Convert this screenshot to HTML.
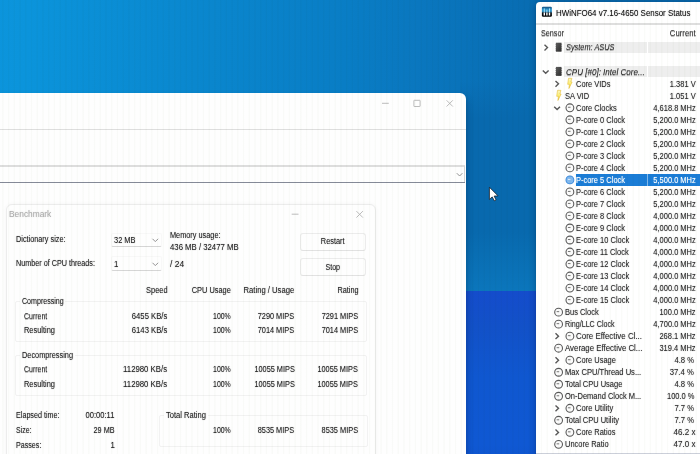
<!DOCTYPE html>
<html><head><meta charset="utf-8"><title>HWiNFO64 Sensor Status / 7-Zip Benchmark</title>
<style>
html,body{margin:0;padding:0;}
body{width:700px;height:454px;overflow:hidden;position:relative;background:#0b74c4;font-family:"Liberation Sans", sans-serif;}
#root{position:absolute;left:0;top:0;width:700px;height:454px;overflow:hidden;}
.abs{position:absolute;}
#bg{left:-20px;top:-20px;width:740px;height:494px;
 background:linear-gradient(93deg,#0c95dd 0px,#0b94db 50px,#0a87ce 220px,#097dc5 370px,#0a77bf 440px,#086db3 545px,#086aae 580px,#0868ac 760px);}
#bg3{left:460px;top:80px;width:80px;height:210.7px;background:linear-gradient(180deg,rgba(8,105,174,0) 0%,#0869ae 18%,#0869ae 72%,#0b76bc 100%);}
#bg2{left:460px;top:290.7px;width:80px;height:180px;background:linear-gradient(180deg,#144ccc 0%,#1251c8 20%,#0f57d0 48%,#0f58d3 85%,#0e54cc 100%);}
#zwin{left:-20px;top:93px;width:486px;height:390px;background:#fefefe;border-radius:6px;box-shadow:1px 4px 7px rgba(0,0,30,0.22);}
.hl{position:absolute;left:0;height:1px;}
#bench{left:5.9px;top:204px;width:370.4px;height:270px;background:#fefefe;border:1px solid #ececec;border-radius:6px;box-sizing:border-box;box-shadow:0 0 4px rgba(0,0,0,0.04);}
.grp{position:absolute;border:1px solid #f2f2f2;box-sizing:border-box;border-radius:2px;}
.lbl{position:absolute;background:#fefefe;height:3px;}
.btn{position:absolute;border:1px solid #ececec;border-bottom-color:#e2e2e2;border-radius:3px;box-sizing:border-box;background:#fefefe;}
.dd{position:absolute;border:1px solid #f8f8f8;border-bottom:1px solid #d6d6d6;border-radius:2px;box-sizing:border-box;background:#fefefe;}
#hw{left:535.7px;top:2.2px;width:185px;height:480px;background:#ffffff;border-radius:4px;box-shadow:0 1px 7px rgba(0,0,30,0.30);}
.t{position:absolute;white-space:pre;line-height:12px;height:12px;-webkit-text-stroke:0.0px currentColor;text-shadow:0 0 1.2px rgba(40,40,40,0.45);}
svg{position:absolute;left:0;top:0;overflow:visible;}
</style></head><body>
<div id="root">
<div id="bg" class="abs"></div>
<div id="bg3" class="abs"></div>
<div id="bg2" class="abs"></div>

<div id="zwin" class="abs"></div>
<div class="hl" style="top:128.5px;width:466px;height:1.5px;background:#dedede;"></div>
<div class="hl" style="top:165.1px;width:465px;height:1.5px;background:#dddddd;"></div>
<div class="hl" style="top:181.5px;width:465px;height:1.4px;background:#858a98;"></div>
<div class="abs" style="left:464.3px;top:166px;width:1px;height:16px;background:#d4d4d4;"></div>

<div id="bench" class="abs"></div>
<div class="dd" style="left:111px;top:232.8px;width:50.5px;height:14.2px;"></div>
<div class="dd" style="left:111px;top:256px;width:50.5px;height:14.5px;"></div>
<div class="btn" style="left:300px;top:233px;width:66px;height:17.5px;"></div>
<div class="btn" style="left:300px;top:258px;width:66px;height:17.5px;"></div>
<div class="grp" style="left:14.8px;top:301px;width:352.7px;height:40.5px;"></div>
<div class="lbl" style="left:20px;top:300px;width:45px;"></div>
<div class="grp" style="left:14.8px;top:355px;width:352.7px;height:40.5px;"></div>
<div class="lbl" style="left:20px;top:354px;width:55px;"></div>
<div class="grp" style="left:159px;top:415px;width:208.5px;height:32px;"></div>
<div class="lbl" style="left:164px;top:414px;width:44px;"></div>

<div id="hw" class="abs"></div>
<div class="hl" style="left:536px;top:23.4px;width:180px;height:1.4px;background:#dedede;"></div>
<div class="abs" style="left:564.3px;top:42px;width:82.8px;height:11px;background:#eeeeee;"></div>
<div class="abs" style="left:648px;top:42px;width:62px;height:11px;background:#eeeeee;"></div>
<div class="abs" style="left:564.3px;top:66.2px;width:82.8px;height:11px;background:#eeeeee;"></div>
<div class="abs" style="left:648px;top:66.2px;width:62px;height:11px;background:#eeeeee;"></div>
<div class="abs" style="left:576px;top:174px;width:134px;height:11.5px;background:#1a7cd6;"></div>
<div class="abs" style="left:647px;top:174px;width:0.8px;height:11.5px;background:rgba(255,255,255,0.45);"></div>
<div class="hl" style="left:536px;top:452.7px;width:174px;height:3px;background:#ccd0da;"></div>

<svg width="700" height="454" viewBox="0 0 700 454">
<!-- 7-zip main window caption buttons -->
<path d="M382 103.3h6.8" stroke="#b4b4b4" stroke-width="0.9" fill="none"/>
<rect x="413.9" y="100.3" width="6.2" height="6.2" rx="0.3" fill="none" stroke="#b4b4b4" stroke-width="0.9"/>
<path d="M446.6 100.3l6.2 6.2M452.8 100.3l-6.2 6.2" stroke="#b4b4b4" stroke-width="0.9" fill="none"/>
<path d="M456.8 173.2 L459.6 176.0 L462.40000000000003 173.2" stroke="#888" stroke-width="0.9" fill="none"/>
<!-- benchmark caption buttons -->
<path d="M291.7 214.2h6.8" stroke="#b4b4b4" stroke-width="0.9" fill="none"/>
<path d="M356.4 211.1l6.5 6.5M362.9 211.1l-6.5 6.5" stroke="#b4b4b4" stroke-width="0.9" fill="none"/>
<path d="M152.5 238.79999999999998 L155.3 241.6 L158.10000000000002 238.79999999999998" stroke="#888" stroke-width="0.9" fill="none"/>
<path d="M152.5 262.8 L155.3 265.59999999999997 L158.10000000000002 262.8" stroke="#888" stroke-width="0.9" fill="none"/>
<!-- HWiNFO app icon -->
<defs>
<linearGradient id="ig" x1="0" y1="0" x2="0" y2="1"><stop offset="0" stop-color="#15507f"/><stop offset="0.32" stop-color="#2f9fd8"/><stop offset="0.5" stop-color="#2a80b0"/><stop offset="0.62" stop-color="#0c1218"/><stop offset="1" stop-color="#000"/></linearGradient>
<linearGradient id="bg_bolt" x1="0" y1="0" x2="0" y2="1"><stop offset="0" stop-color="#fffbc4"/><stop offset="0.5" stop-color="#fff27a"/><stop offset="1" stop-color="#ffe21a"/></linearGradient>
<linearGradient id="bg_chip" x1="0" y1="0" x2="1" y2="1"><stop offset="0" stop-color="#5e5e5e"/><stop offset="1" stop-color="#2c2c2c"/></linearGradient>
</defs>
<rect x="541.9" y="6.8" width="10" height="10" rx="1.2" fill="url(#ig)"/>
<path d="M544.3 8.4v3.8M549.5 8.4v3.8M546.9 9.6v2.6" stroke="#b8ecff" stroke-width="0.9"/>
<path d="M544.3 12.5v3.1M546.9 12.5v3.1M549.5 12.5v3.1" stroke="#ffffff" stroke-width="1.4"/>
<path d="M568.50 78.30 L571.90 78.30 L570.90 82.00 L572.10 82.00 L568.90 88.50 L569.40 84.30 L567.70 84.30 Z" fill="url(#bg_bolt)" stroke="#e2bc3c" stroke-width="0.6" stroke-linejoin="round"/><path d="M555.5 80.89999999999999 L558.5 83.8 L555.5 86.7" stroke="#585858" stroke-width="1.4" fill="none"/><path d="M557.50 90.32 L560.90 90.32 L559.90 94.02 L561.10 94.02 L557.90 100.52 L558.40 96.32 L556.70 96.32 Z" fill="url(#bg_bolt)" stroke="#e2bc3c" stroke-width="0.6" stroke-linejoin="round"/><circle cx="569.9" cy="107.78999999999999" r="3.9" fill="#fbfbfb" stroke="#5a5a5a" stroke-width="1.1"/><path d="M567.9 107.28999999999999H570.5" stroke="#6a6a6a" stroke-width="0.9" fill="none"/><path d="M554.2 106.68999999999998 L557.1 109.58999999999999 L560.0 106.68999999999998" stroke="#585858" stroke-width="1.4" fill="none"/><circle cx="569.9" cy="119.81" r="3.9" fill="#fbfbfb" stroke="#5a5a5a" stroke-width="1.1"/><path d="M567.9 119.31H570.5" stroke="#6a6a6a" stroke-width="0.9" fill="none"/><circle cx="569.9" cy="131.83" r="3.9" fill="#fbfbfb" stroke="#5a5a5a" stroke-width="1.1"/><path d="M567.9 131.33H570.5" stroke="#6a6a6a" stroke-width="0.9" fill="none"/><circle cx="569.9" cy="143.85" r="3.9" fill="#fbfbfb" stroke="#5a5a5a" stroke-width="1.1"/><path d="M567.9 143.35H570.5" stroke="#6a6a6a" stroke-width="0.9" fill="none"/><circle cx="569.9" cy="155.87" r="3.9" fill="#fbfbfb" stroke="#5a5a5a" stroke-width="1.1"/><path d="M567.9 155.37H570.5" stroke="#6a6a6a" stroke-width="0.9" fill="none"/><circle cx="569.9" cy="167.89000000000001" r="3.9" fill="#fbfbfb" stroke="#5a5a5a" stroke-width="1.1"/><path d="M567.9 167.39000000000001H570.5" stroke="#6a6a6a" stroke-width="0.9" fill="none"/><circle cx="569.9" cy="179.91" r="3.9" fill="#80b8ee" stroke="#3f8cdc" stroke-width="1.05"/><path d="M567.9 179.41H570.5" stroke="#e8f2fc" stroke-width="0.9" fill="none"/><circle cx="569.9" cy="191.92999999999998" r="3.9" fill="#fbfbfb" stroke="#5a5a5a" stroke-width="1.1"/><path d="M567.9 191.42999999999998H570.5" stroke="#6a6a6a" stroke-width="0.9" fill="none"/><circle cx="569.9" cy="203.95" r="3.9" fill="#fbfbfb" stroke="#5a5a5a" stroke-width="1.1"/><path d="M567.9 203.45H570.5" stroke="#6a6a6a" stroke-width="0.9" fill="none"/><circle cx="569.9" cy="215.97" r="3.9" fill="#fbfbfb" stroke="#5a5a5a" stroke-width="1.1"/><path d="M567.9 215.47H570.5" stroke="#6a6a6a" stroke-width="0.9" fill="none"/><circle cx="569.9" cy="227.99" r="3.9" fill="#fbfbfb" stroke="#5a5a5a" stroke-width="1.1"/><path d="M567.9 227.49H570.5" stroke="#6a6a6a" stroke-width="0.9" fill="none"/><circle cx="569.9" cy="240.01" r="3.9" fill="#fbfbfb" stroke="#5a5a5a" stroke-width="1.1"/><path d="M567.9 239.51H570.5" stroke="#6a6a6a" stroke-width="0.9" fill="none"/><circle cx="569.9" cy="252.03" r="3.9" fill="#fbfbfb" stroke="#5a5a5a" stroke-width="1.1"/><path d="M567.9 251.53H570.5" stroke="#6a6a6a" stroke-width="0.9" fill="none"/><circle cx="569.9" cy="264.04999999999995" r="3.9" fill="#fbfbfb" stroke="#5a5a5a" stroke-width="1.1"/><path d="M567.9 263.54999999999995H570.5" stroke="#6a6a6a" stroke-width="0.9" fill="none"/><circle cx="569.9" cy="276.06999999999994" r="3.9" fill="#fbfbfb" stroke="#5a5a5a" stroke-width="1.1"/><path d="M567.9 275.56999999999994H570.5" stroke="#6a6a6a" stroke-width="0.9" fill="none"/><circle cx="569.9" cy="288.09" r="3.9" fill="#fbfbfb" stroke="#5a5a5a" stroke-width="1.1"/><path d="M567.9 287.59H570.5" stroke="#6a6a6a" stroke-width="0.9" fill="none"/><circle cx="569.9" cy="300.10999999999996" r="3.9" fill="#fbfbfb" stroke="#5a5a5a" stroke-width="1.1"/><path d="M567.9 299.60999999999996H570.5" stroke="#6a6a6a" stroke-width="0.9" fill="none"/><circle cx="558.6" cy="312.13" r="3.9" fill="#fbfbfb" stroke="#5a5a5a" stroke-width="1.1"/><path d="M556.6 311.63H559.2" stroke="#6a6a6a" stroke-width="0.9" fill="none"/><circle cx="558.6" cy="324.15" r="3.9" fill="#fbfbfb" stroke="#5a5a5a" stroke-width="1.1"/><path d="M556.6 323.65H559.2" stroke="#6a6a6a" stroke-width="0.9" fill="none"/><circle cx="569.9" cy="336.16999999999996" r="3.9" fill="#fbfbfb" stroke="#5a5a5a" stroke-width="1.1"/><path d="M567.9 335.66999999999996H570.5" stroke="#6a6a6a" stroke-width="0.9" fill="none"/><path d="M555.5 333.32 L558.5 336.21999999999997 L555.5 339.11999999999995" stroke="#585858" stroke-width="1.4" fill="none"/><circle cx="558.6" cy="348.18999999999994" r="3.9" fill="#fbfbfb" stroke="#5a5a5a" stroke-width="1.1"/><path d="M556.6 347.68999999999994H559.2" stroke="#6a6a6a" stroke-width="0.9" fill="none"/><circle cx="569.9" cy="360.2099999999999" r="3.9" fill="#fbfbfb" stroke="#5a5a5a" stroke-width="1.1"/><path d="M567.9 359.7099999999999H570.5" stroke="#6a6a6a" stroke-width="0.9" fill="none"/><path d="M555.5 357.35999999999996 L558.5 360.25999999999993 L555.5 363.1599999999999" stroke="#585858" stroke-width="1.4" fill="none"/><circle cx="558.6" cy="372.23" r="3.9" fill="#fbfbfb" stroke="#5a5a5a" stroke-width="1.1"/><path d="M556.6 371.73H559.2" stroke="#6a6a6a" stroke-width="0.9" fill="none"/><circle cx="558.6" cy="384.25" r="3.9" fill="#fbfbfb" stroke="#5a5a5a" stroke-width="1.1"/><path d="M556.6 383.75H559.2" stroke="#6a6a6a" stroke-width="0.9" fill="none"/><circle cx="558.6" cy="396.27" r="3.9" fill="#fbfbfb" stroke="#5a5a5a" stroke-width="1.1"/><path d="M556.6 395.77H559.2" stroke="#6a6a6a" stroke-width="0.9" fill="none"/><circle cx="569.9" cy="408.28999999999996" r="3.9" fill="#fbfbfb" stroke="#5a5a5a" stroke-width="1.1"/><path d="M567.9 407.78999999999996H570.5" stroke="#6a6a6a" stroke-width="0.9" fill="none"/><path d="M555.5 405.44 L558.5 408.34 L555.5 411.23999999999995" stroke="#585858" stroke-width="1.4" fill="none"/><circle cx="558.6" cy="420.30999999999995" r="3.9" fill="#fbfbfb" stroke="#5a5a5a" stroke-width="1.1"/><path d="M556.6 419.80999999999995H559.2" stroke="#6a6a6a" stroke-width="0.9" fill="none"/><circle cx="569.9" cy="432.3299999999999" r="3.9" fill="#fbfbfb" stroke="#5a5a5a" stroke-width="1.1"/><path d="M567.9 431.8299999999999H570.5" stroke="#6a6a6a" stroke-width="0.9" fill="none"/><path d="M555.5 429.47999999999996 L558.5 432.37999999999994 L555.5 435.2799999999999" stroke="#585858" stroke-width="1.4" fill="none"/><circle cx="558.6" cy="444.3499999999999" r="3.9" fill="#fbfbfb" stroke="#5a5a5a" stroke-width="1.1"/><path d="M556.6 443.8499999999999H559.2" stroke="#6a6a6a" stroke-width="0.9" fill="none"/><path d="M544.5 44.7 L547.5 47.6 L544.5 50.5" stroke="#585858" stroke-width="1.4" fill="none"/><path d="M542.8000000000001 70.45 L545.7 73.35000000000001 L548.6 70.45" stroke="#585858" stroke-width="1.4" fill="none"/><path d="M555.3 44.300000000000004h6.8M555.3 46.300000000000004h6.8M555.3 48.300000000000004h6.8M555.3 50.1h6.8" stroke="#777" stroke-width="0.6"/><rect x="555.9" y="42.7" width="5.6" height="9" fill="url(#bg_chip)"/><path d="M555.3 68.5h6.8M555.3 70.5h6.8M555.3 72.5h6.8M555.3 74.30000000000001h6.8" stroke="#777" stroke-width="0.6"/><rect x="555.9" y="66.9" width="5.6" height="9" fill="url(#bg_chip)"/>
<!-- mouse cursor -->
<path d="M489.4 187.2 L489.4 199.4 L492.2 196.9 L494.3 200.8 L496.1 199.9 L494.1 196.1 L498.1 195.9 Z" fill="#ffffff" stroke="#16202c" stroke-width="0.8" stroke-linejoin="round"/>
</svg>
<span class="t" style="top:208.00px;font-size:9px;color:#adadad;text-shadow:0 0 1.2px rgba(170,170,170,0.5);left:9.20px;transform-origin:0 50%;transform:scaleX(0.9290);">Benchmark</span><span class="t" style="top:233.00px;font-size:8.5px;color:#242424;left:15.80px;transform-origin:0 50%;transform:scaleX(0.8588);">Dictionary size:</span><span class="t" style="top:257.00px;font-size:8.5px;color:#242424;left:15.80px;transform-origin:0 50%;transform:scaleX(0.8487);">Number of CPU threads:</span><span class="t" style="top:234.00px;font-size:8.5px;color:#242424;left:113.70px;transform-origin:0 50%;transform:scaleX(0.8748);">32 MB</span><span class="t" style="top:258.00px;font-size:8.5px;color:#242424;left:113.90px;transform-origin:0 50%;transform:scaleX(0.9200);">1</span><span class="t" style="top:229.00px;font-size:8.5px;color:#242424;left:170.10px;transform-origin:0 50%;transform:scaleX(0.8619);">Memory usage:</span><span class="t" style="top:241.00px;font-size:8.5px;color:#242424;left:170.10px;transform-origin:0 50%;transform:scaleX(0.9130);">436 MB / 32477 MB</span><span class="t" style="top:258.00px;font-size:8.5px;color:#242424;left:170.10px;transform-origin:0 50%;transform:scaleX(0.9938);">/ 24</span><span class="t" style="top:235.00px;font-size:8.5px;color:#242424;left:319.40px;transform-origin:50% 50%;transform:scaleX(0.8684);">Restart</span><span class="t" style="top:261.00px;font-size:8.5px;color:#242424;left:324.05px;transform-origin:50% 50%;transform:scaleX(0.8343);">Stop</span><span class="t" style="top:284.00px;font-size:8.5px;color:#242424;right:532.10px;transform-origin:100% 50%;transform:scaleX(0.8742);">Speed</span><span class="t" style="top:284.00px;font-size:8.5px;color:#242424;right:469.10px;transform-origin:100% 50%;transform:scaleX(0.8732);">CPU Usage</span><span class="t" style="top:284.00px;font-size:8.5px;color:#242424;right:405.50px;transform-origin:100% 50%;transform:scaleX(0.9016);">Rating / Usage</span><span class="t" style="top:284.00px;font-size:8.5px;color:#242424;right:341.80px;transform-origin:100% 50%;transform:scaleX(0.8626);">Rating</span><span class="t" style="top:295.00px;font-size:8.5px;color:#242424;left:21.50px;transform-origin:0 50%;transform:scaleX(0.8327);">Compressing</span><span class="t" style="top:349.00px;font-size:8.5px;color:#242424;left:22.00px;transform-origin:0 50%;transform:scaleX(0.8635);">Decompressing</span><span class="t" style="top:310.00px;font-size:8.5px;color:#242424;text-shadow:0 1px 0.6px rgba(40,40,40,0.4);left:23.50px;transform-origin:0 50%;transform:scaleX(0.8221);">Current</span><span class="t" style="top:310.00px;font-size:8.5px;color:#242424;right:532.50px;transform-origin:100% 50%;transform:scaleX(0.9023);">6455 KB/s</span><span class="t" style="top:310.00px;font-size:8.5px;color:#242424;right:468.80px;transform-origin:100% 50%;transform:scaleX(0.8138);">100%</span><span class="t" style="top:310.00px;font-size:8.5px;color:#242424;right:405.50px;transform-origin:100% 50%;transform:scaleX(0.8630);">7290 MIPS</span><span class="t" style="top:310.00px;font-size:8.5px;color:#242424;right:341.80px;transform-origin:100% 50%;transform:scaleX(0.8654);">7291 MIPS</span><span class="t" style="top:324.00px;font-size:8.5px;color:#242424;left:23.90px;transform-origin:0 50%;transform:scaleX(0.8748);">Resulting</span><span class="t" style="top:324.00px;font-size:8.5px;color:#242424;right:532.50px;transform-origin:100% 50%;transform:scaleX(0.9023);">6143 KB/s</span><span class="t" style="top:324.00px;font-size:8.5px;color:#242424;right:468.80px;transform-origin:100% 50%;transform:scaleX(0.8138);">100%</span><span class="t" style="top:324.00px;font-size:8.5px;color:#242424;right:405.50px;transform-origin:100% 50%;transform:scaleX(0.8630);">7014 MIPS</span><span class="t" style="top:324.00px;font-size:8.5px;color:#242424;right:341.80px;transform-origin:100% 50%;transform:scaleX(0.8654);">7014 MIPS</span><span class="t" style="top:363.00px;font-size:8.5px;color:#242424;text-shadow:0 1px 0.6px rgba(40,40,40,0.4);left:23.50px;transform-origin:0 50%;transform:scaleX(0.8221);">Current</span><span class="t" style="top:363.00px;font-size:8.5px;color:#242424;right:532.50px;transform-origin:100% 50%;transform:scaleX(0.9158);">112980 KB/s</span><span class="t" style="top:363.00px;font-size:8.5px;color:#242424;right:468.80px;transform-origin:100% 50%;transform:scaleX(0.8138);">100%</span><span class="t" style="top:363.00px;font-size:8.5px;color:#242424;right:405.50px;transform-origin:100% 50%;transform:scaleX(0.8636);">10055 MIPS</span><span class="t" style="top:363.00px;font-size:8.5px;color:#242424;right:341.80px;transform-origin:100% 50%;transform:scaleX(0.8636);">10055 MIPS</span><span class="t" style="top:378.00px;font-size:8.5px;color:#242424;left:23.90px;transform-origin:0 50%;transform:scaleX(0.8748);">Resulting</span><span class="t" style="top:378.00px;font-size:8.5px;color:#242424;right:532.50px;transform-origin:100% 50%;transform:scaleX(0.9158);">112980 KB/s</span><span class="t" style="top:378.00px;font-size:8.5px;color:#242424;right:468.80px;transform-origin:100% 50%;transform:scaleX(0.8138);">100%</span><span class="t" style="top:378.00px;font-size:8.5px;color:#242424;right:405.50px;transform-origin:100% 50%;transform:scaleX(0.8636);">10055 MIPS</span><span class="t" style="top:378.00px;font-size:8.5px;color:#242424;right:341.80px;transform-origin:100% 50%;transform:scaleX(0.8636);">10055 MIPS</span><span class="t" style="top:409.00px;font-size:8.5px;color:#242424;left:15.80px;transform-origin:0 50%;transform:scaleX(0.8447);">Elapsed time:</span><span class="t" style="top:409.00px;font-size:8.5px;color:#242424;right:585.70px;transform-origin:100% 50%;transform:scaleX(0.8901);">00:00:11</span><span class="t" style="top:424.00px;font-size:8.5px;color:#242424;left:15.80px;transform-origin:0 50%;transform:scaleX(0.8198);">Size:</span><span class="t" style="top:424.00px;font-size:8.5px;color:#242424;right:585.70px;transform-origin:100% 50%;transform:scaleX(0.8544);">29 MB</span><span class="t" style="top:439.00px;font-size:8.5px;color:#242424;left:15.80px;transform-origin:0 50%;transform:scaleX(0.8397);">Passes:</span><span class="t" style="top:439.00px;font-size:8.5px;color:#242424;right:585.70px;transform-origin:100% 50%;transform:scaleX(0.9200);">1</span><span class="t" style="top:409.00px;font-size:8.5px;color:#242424;left:166.30px;transform-origin:0 50%;transform:scaleX(0.8888);">Total Rating</span><span class="t" style="top:424.00px;font-size:8.5px;color:#242424;right:468.80px;transform-origin:100% 50%;transform:scaleX(0.8138);">100%</span><span class="t" style="top:424.00px;font-size:8.5px;color:#242424;right:405.50px;transform-origin:100% 50%;transform:scaleX(0.8630);">8535 MIPS</span><span class="t" style="top:424.00px;font-size:8.5px;color:#242424;right:341.80px;transform-origin:100% 50%;transform:scaleX(0.8678);">8535 MIPS</span><span class="t" style="top:7.00px;font-size:9.4px;color:#111;left:556.30px;transform-origin:0 50%;transform:scaleX(0.8456);">HWiNFO64 v7.16-4650 Sensor Status</span><span class="t" style="top:27.00px;font-size:8.6px;color:#2c2c2c;text-shadow:0 1px 0.6px rgba(40,40,40,0.4);left:540.50px;transform-origin:0 50%;transform:scaleX(0.8408);">Sensor</span><span class="t" style="top:27.00px;font-size:8.6px;color:#2c2c2c;text-shadow:0 1px 0.6px rgba(40,40,40,0.4);right:4.80px;transform-origin:100% 50%;transform:scaleX(0.9003);">Current</span><span class="t" style="top:41.00px;font-size:8.6px;color:#2c2c2c;text-shadow:0 1px 0.6px rgba(40,40,40,0.4);font-style:italic;left:565.70px;transform-origin:0 50%;transform:scaleX(0.8582);">System: ASUS</span><span class="t" style="top:66.00px;font-size:8.6px;color:#2c2c2c;text-shadow:0 1px 0.6px rgba(40,40,40,0.4);font-style:italic;left:566.00px;transform-origin:0 50%;transform:scaleX(0.9362);">CPU [#0]: Intel Core...</span><span class="t" style="top:78.00px;font-size:8.6px;color:#2c2c2c;left:576.40px;transform-origin:0 50%;transform:scaleX(0.8698);">Core VIDs</span><span class="t" style="top:78.00px;font-size:8.6px;color:#2c2c2c;right:4.60px;transform-origin:100% 50%;transform:scaleX(0.8698);">1.381 V</span><span class="t" style="top:90.00px;font-size:8.6px;color:#2c2c2c;left:565.10px;transform-origin:0 50%;transform:scaleX(0.8698);">SA VID</span><span class="t" style="top:90.00px;font-size:8.6px;color:#2c2c2c;right:4.60px;transform-origin:100% 50%;transform:scaleX(0.8698);">1.051 V</span><span class="t" style="top:102.00px;font-size:8.6px;color:#2c2c2c;left:576.40px;transform-origin:0 50%;transform:scaleX(0.8698);">Core Clocks</span><span class="t" style="top:102.00px;font-size:8.6px;color:#2c2c2c;right:4.60px;transform-origin:100% 50%;transform:scaleX(0.8698);">4,618.8 MHz</span><span class="t" style="top:114.00px;font-size:8.6px;color:#2c2c2c;left:576.40px;transform-origin:0 50%;transform:scaleX(0.8698);">P-core 0 Clock</span><span class="t" style="top:114.00px;font-size:8.6px;color:#2c2c2c;right:4.60px;transform-origin:100% 50%;transform:scaleX(0.8698);">5,200.0 MHz</span><span class="t" style="top:126.00px;font-size:8.6px;color:#2c2c2c;left:576.40px;transform-origin:0 50%;transform:scaleX(0.8698);">P-core 1 Clock</span><span class="t" style="top:126.00px;font-size:8.6px;color:#2c2c2c;right:4.60px;transform-origin:100% 50%;transform:scaleX(0.8698);">5,200.0 MHz</span><span class="t" style="top:138.00px;font-size:8.6px;color:#2c2c2c;left:576.40px;transform-origin:0 50%;transform:scaleX(0.8698);">P-core 2 Clock</span><span class="t" style="top:138.00px;font-size:8.6px;color:#2c2c2c;right:4.60px;transform-origin:100% 50%;transform:scaleX(0.8698);">5,200.0 MHz</span><span class="t" style="top:150.00px;font-size:8.6px;color:#2c2c2c;left:576.40px;transform-origin:0 50%;transform:scaleX(0.8698);">P-core 3 Clock</span><span class="t" style="top:150.00px;font-size:8.6px;color:#2c2c2c;right:4.60px;transform-origin:100% 50%;transform:scaleX(0.8698);">5,200.0 MHz</span><span class="t" style="top:162.00px;font-size:8.6px;color:#2c2c2c;left:576.40px;transform-origin:0 50%;transform:scaleX(0.8698);">P-core 4 Clock</span><span class="t" style="top:162.00px;font-size:8.6px;color:#2c2c2c;right:4.60px;transform-origin:100% 50%;transform:scaleX(0.8698);">5,200.0 MHz</span><span class="t" style="top:174.00px;font-size:8.6px;color:#ffffff;text-shadow:0 0 1.2px rgba(255,255,255,0.55);left:576.40px;transform-origin:0 50%;transform:scaleX(0.8698);">P-core 5 Clock</span><span class="t" style="top:174.00px;font-size:8.6px;color:#ffffff;text-shadow:0 0 1.2px rgba(255,255,255,0.55);right:4.60px;transform-origin:100% 50%;transform:scaleX(0.8698);">5,500.0 MHz</span><span class="t" style="top:186.00px;font-size:8.6px;color:#2c2c2c;left:576.40px;transform-origin:0 50%;transform:scaleX(0.8698);">P-core 6 Clock</span><span class="t" style="top:186.00px;font-size:8.6px;color:#2c2c2c;right:4.60px;transform-origin:100% 50%;transform:scaleX(0.8698);">5,200.0 MHz</span><span class="t" style="top:198.00px;font-size:8.6px;color:#2c2c2c;left:576.40px;transform-origin:0 50%;transform:scaleX(0.8698);">P-core 7 Clock</span><span class="t" style="top:198.00px;font-size:8.6px;color:#2c2c2c;right:4.60px;transform-origin:100% 50%;transform:scaleX(0.8698);">5,200.0 MHz</span><span class="t" style="top:210.00px;font-size:8.6px;color:#2c2c2c;left:576.40px;transform-origin:0 50%;transform:scaleX(0.8698);">E-core 8 Clock</span><span class="t" style="top:210.00px;font-size:8.6px;color:#2c2c2c;right:4.60px;transform-origin:100% 50%;transform:scaleX(0.8698);">4,000.0 MHz</span><span class="t" style="top:222.00px;font-size:8.6px;color:#2c2c2c;left:576.40px;transform-origin:0 50%;transform:scaleX(0.8698);">E-core 9 Clock</span><span class="t" style="top:222.00px;font-size:8.6px;color:#2c2c2c;right:4.60px;transform-origin:100% 50%;transform:scaleX(0.8698);">4,000.0 MHz</span><span class="t" style="top:234.00px;font-size:8.6px;color:#2c2c2c;left:576.40px;transform-origin:0 50%;transform:scaleX(0.8698);">E-core 10 Clock</span><span class="t" style="top:234.00px;font-size:8.6px;color:#2c2c2c;right:4.60px;transform-origin:100% 50%;transform:scaleX(0.8698);">4,000.0 MHz</span><span class="t" style="top:246.00px;font-size:8.6px;color:#2c2c2c;left:576.40px;transform-origin:0 50%;transform:scaleX(0.8698);">E-core 11 Clock</span><span class="t" style="top:246.00px;font-size:8.6px;color:#2c2c2c;right:4.60px;transform-origin:100% 50%;transform:scaleX(0.8698);">4,000.0 MHz</span><span class="t" style="top:258.00px;font-size:8.6px;color:#2c2c2c;left:576.40px;transform-origin:0 50%;transform:scaleX(0.8698);">E-core 12 Clock</span><span class="t" style="top:258.00px;font-size:8.6px;color:#2c2c2c;right:4.60px;transform-origin:100% 50%;transform:scaleX(0.8698);">4,000.0 MHz</span><span class="t" style="top:270.00px;font-size:8.6px;color:#2c2c2c;left:576.40px;transform-origin:0 50%;transform:scaleX(0.8698);">E-core 13 Clock</span><span class="t" style="top:270.00px;font-size:8.6px;color:#2c2c2c;right:4.60px;transform-origin:100% 50%;transform:scaleX(0.8698);">4,000.0 MHz</span><span class="t" style="top:282.00px;font-size:8.6px;color:#2c2c2c;left:576.40px;transform-origin:0 50%;transform:scaleX(0.8698);">E-core 14 Clock</span><span class="t" style="top:282.00px;font-size:8.6px;color:#2c2c2c;right:4.60px;transform-origin:100% 50%;transform:scaleX(0.8698);">4,000.0 MHz</span><span class="t" style="top:294.00px;font-size:8.6px;color:#2c2c2c;left:576.40px;transform-origin:0 50%;transform:scaleX(0.8698);">E-core 15 Clock</span><span class="t" style="top:294.00px;font-size:8.6px;color:#2c2c2c;right:4.60px;transform-origin:100% 50%;transform:scaleX(0.8698);">4,000.0 MHz</span><span class="t" style="top:306.00px;font-size:8.6px;color:#2c2c2c;left:565.10px;transform-origin:0 50%;transform:scaleX(0.8698);">Bus Clock</span><span class="t" style="top:306.00px;font-size:8.6px;color:#2c2c2c;right:4.60px;transform-origin:100% 50%;transform:scaleX(0.8698);">100.0 MHz</span><span class="t" style="top:318.00px;font-size:8.6px;color:#2c2c2c;left:565.10px;transform-origin:0 50%;transform:scaleX(0.8308);">Ring/LLC Clock</span><span class="t" style="top:318.00px;font-size:8.6px;color:#2c2c2c;right:4.60px;transform-origin:100% 50%;transform:scaleX(0.8698);">4,700.0 MHz</span><span class="t" style="top:330.00px;font-size:8.6px;color:#2c2c2c;left:576.40px;transform-origin:0 50%;transform:scaleX(0.9233);">Core Effective Cl...</span><span class="t" style="top:330.00px;font-size:8.6px;color:#2c2c2c;right:4.60px;transform-origin:100% 50%;transform:scaleX(0.8698);">268.1 MHz</span><span class="t" style="top:342.00px;font-size:8.6px;color:#2c2c2c;left:565.10px;transform-origin:0 50%;transform:scaleX(0.9136);">Average Effective Cl...</span><span class="t" style="top:342.00px;font-size:8.6px;color:#2c2c2c;right:4.60px;transform-origin:100% 50%;transform:scaleX(0.8698);">319.4 MHz</span><span class="t" style="top:354.00px;font-size:8.6px;color:#2c2c2c;left:576.40px;transform-origin:0 50%;transform:scaleX(0.8698);">Core Usage</span><span class="t" style="top:354.00px;font-size:8.6px;color:#2c2c2c;right:5.80px;transform-origin:100% 50%;transform:scaleX(0.8915);">4.8 %</span><span class="t" style="top:366.00px;font-size:8.6px;color:#2c2c2c;left:565.10px;transform-origin:0 50%;transform:scaleX(0.8816);">Max CPU/Thread Us...</span><span class="t" style="top:366.00px;font-size:8.6px;color:#2c2c2c;right:5.80px;transform-origin:100% 50%;transform:scaleX(0.8967);">37.4 %</span><span class="t" style="top:378.00px;font-size:8.6px;color:#2c2c2c;left:565.10px;transform-origin:0 50%;transform:scaleX(0.8698);">Total CPU Usage</span><span class="t" style="top:378.00px;font-size:8.6px;color:#2c2c2c;right:5.80px;transform-origin:100% 50%;transform:scaleX(0.8915);">4.8 %</span><span class="t" style="top:390.00px;font-size:8.6px;color:#2c2c2c;left:565.10px;transform-origin:0 50%;transform:scaleX(0.8718);">On-Demand Clock M...</span><span class="t" style="top:390.00px;font-size:8.6px;color:#2c2c2c;right:5.80px;transform-origin:100% 50%;transform:scaleX(0.8749);">100.0 %</span><span class="t" style="top:402.00px;font-size:8.6px;color:#2c2c2c;left:576.40px;transform-origin:0 50%;transform:scaleX(0.8851);">Core Utility</span><span class="t" style="top:402.00px;font-size:8.6px;color:#2c2c2c;right:5.80px;transform-origin:100% 50%;transform:scaleX(0.8915);">7.7 %</span><span class="t" style="top:414.00px;font-size:8.6px;color:#2c2c2c;left:565.10px;transform-origin:0 50%;transform:scaleX(0.8698);">Total CPU Utility</span><span class="t" style="top:414.00px;font-size:8.6px;color:#2c2c2c;right:5.80px;transform-origin:100% 50%;transform:scaleX(0.8915);">7.7 %</span><span class="t" style="top:426.00px;font-size:8.6px;color:#2c2c2c;left:576.40px;transform-origin:0 50%;transform:scaleX(0.8698);">Core Ratios</span><span class="t" style="top:426.00px;font-size:8.6px;color:#2c2c2c;right:5.00px;transform-origin:100% 50%;transform:scaleX(0.9393);">46.2 x</span><span class="t" style="top:438.00px;font-size:8.6px;color:#2c2c2c;left:565.10px;transform-origin:0 50%;transform:scaleX(0.8698);">Uncore Ratio</span><span class="t" style="top:438.00px;font-size:8.6px;color:#2c2c2c;right:5.00px;transform-origin:100% 50%;transform:scaleX(0.9393);">47.0 x</span>
<div class="abs" style="left:-20px;top:-20px;width:740px;height:494px;mix-blend-mode:multiply;background:repeating-linear-gradient(90deg,#fff 0px,#fff 3.6px,#fafbf9 4.4px,#fafbf9 5.0px,#fff 5.73px);background-position:1.05px 0;"></div>
</div>
</body></html>
